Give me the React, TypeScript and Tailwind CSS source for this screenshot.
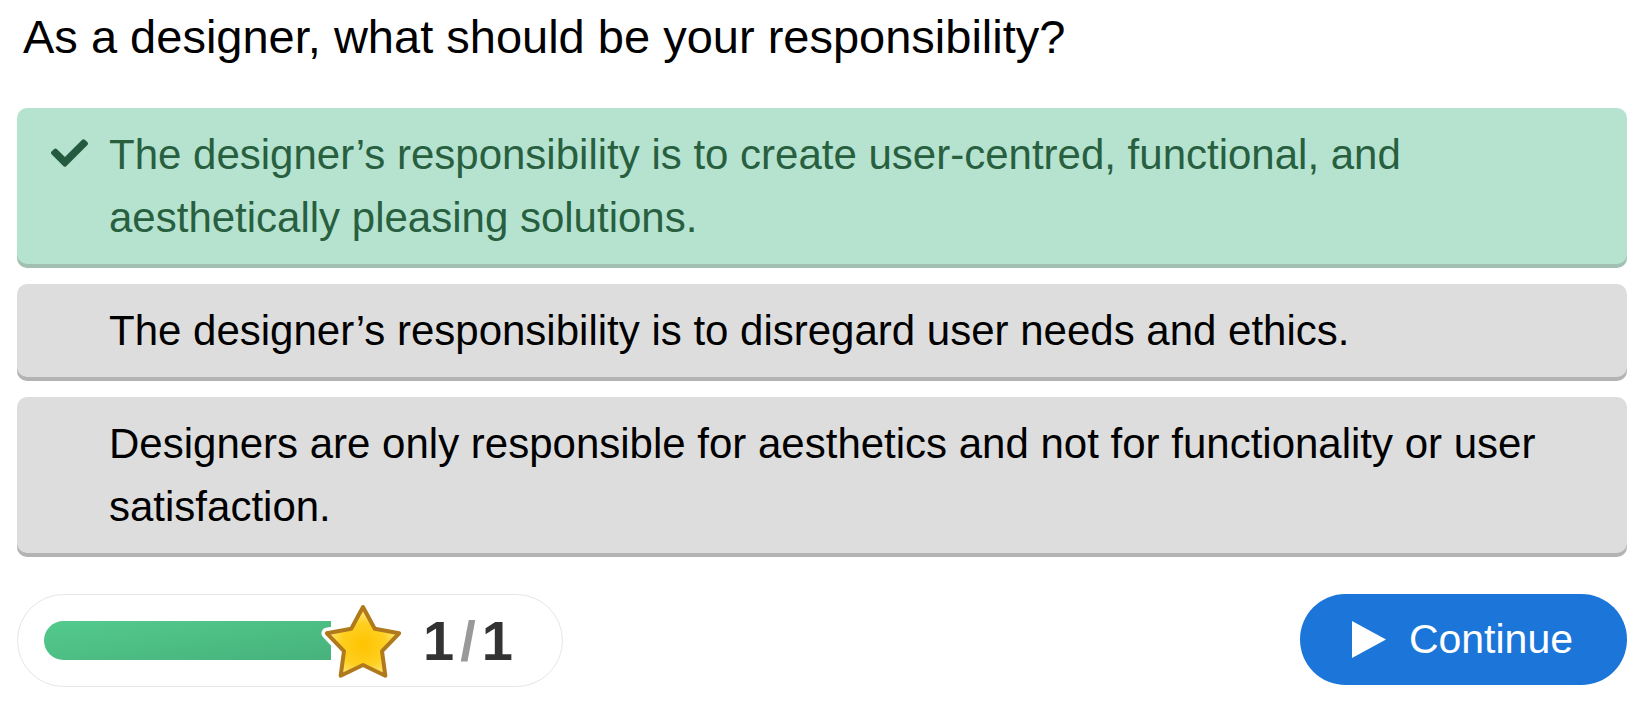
const options = [
  {
    text: "The designer’s responsibility is to create user-centred, functional, and aesthetically pleasing solutions.",
    correct: true,
  },
  { text: "The designer’s responsibility is to disregard user needs and ethics.", correct: false },
  {
    text: "Designers are only responsible for aesthetics and not for functionality or user satisfaction.",
    correct: false,
  },
]

function CheckIcon() {
  return (
    <svg width="37" height="28" viewBox="0 64 512 386" fill="#245a40">
      <path d="M173.898 439.404l-166.4-166.4c-9.997-9.997-9.997-26.206 0-36.204l36.203-36.204c9.997-9.998 26.207-9.998 36.204 0L192 312.69 432.095 72.596c9.997-9.997 26.207-9.997 36.204 0l36.203 36.204c9.997 9.997 9.997 26.206 0 36.204l-294.4 294.401c-9.998 9.997-26.207 9.997-36.204-.001z" />
    </svg>
  )
}

function Star() {
  const cx = 42
  const cy = 43
  const R = 38
  const r = 20
  const pts: string[] = []
  for (let i = 0; i < 10; i++) {
    const a = ((-90 + i * 36) * Math.PI) / 180
    const rad = i % 2 === 0 ? R : r
    pts.push(`${(cx + rad * Math.cos(a)).toFixed(2)},${(cy + rad * Math.sin(a)).toFixed(2)}`)
  }
  const points = pts.join(" ")
  return (
    <svg width="84" height="82" viewBox="0 0 84 82" className="relative z-10 -ml-[10px] mt-[4px] shrink-0">
      <defs>
        <radialGradient id="starFill" cx="50%" cy="55%" r="55%">
          <stop offset="0%" stopColor="#ffc300" />
          <stop offset="55%" stopColor="#ffcf1f" />
          <stop offset="100%" stopColor="#ffec8a" />
        </radialGradient>
      </defs>
      <polygon points={points} fill="white" stroke="white" strokeWidth="11" strokeLinejoin="round" />
      <polygon points={points} fill="url(#starFill)" stroke="#b07a1c" strokeWidth="4" strokeLinejoin="round" />
    </svg>
  )
}

export default function App() {
  return (
    <div className="min-h-screen bg-white pl-[17px] pr-[24px] pt-[11px] font-['Liberation_Sans',Arial,sans-serif]">
      <h1 className="pl-[6px] text-[47px] leading-[52px] text-black mb-[45px]">
        As a designer, what should be your responsibility?
      </h1>

      <div className="flex flex-col gap-[20px]">
        {options.map((o) => (
          <div
            key={o.text}
            className={
              o.correct
                ? "flex items-start rounded-[10px] bg-[#b5e3d0] py-[15px] pl-[34px] pr-[30px] shadow-[0_4px_0_#a2c0b1]"
                : "flex items-start rounded-[10px] bg-[#dddddd] py-[15px] pl-[34px] pr-[30px] shadow-[0_4px_0_#b3b3b3]"
            }
          >
            <div className="flex h-[60px] w-[37px] shrink-0 items-center justify-center mr-[21px]">
              {o.correct && <CheckIcon />}
            </div>
            <p className={o.correct ? "text-[42px] leading-[63px] text-[#28603f]" : "text-[42px] leading-[63px] text-black"}>
              {o.text}
            </p>
          </div>
        ))}
      </div>

      <div className="mt-[41px] flex items-start justify-between">
        <div className="flex h-[93px] w-[546px] items-center rounded-full border border-[#e6e6e6] bg-white pl-[26px]">
          <div className="h-[39px] w-[287px] rounded-l-full bg-gradient-to-br from-[#53ca8d] to-[#47b27c]" />
          <Star />
          <div className="ml-[18px] text-[56px] font-bold leading-none text-[#333333]">
            1<span className="mx-[6px] text-[#999999]">/</span>1
          </div>
        </div>

        <button className="flex h-[91px] items-center rounded-full bg-[#1c76da] pl-[52px] pr-[54px] text-white">
          <svg width="34" height="37" viewBox="0 0 34 37" className="mr-[23px]">
            <polygon points="0,0 34,18.5 0,37" fill="white" />
          </svg>
          <span className="text-[41px] leading-none">Continue</span>
        </button>
      </div>
    </div>
  )
}
